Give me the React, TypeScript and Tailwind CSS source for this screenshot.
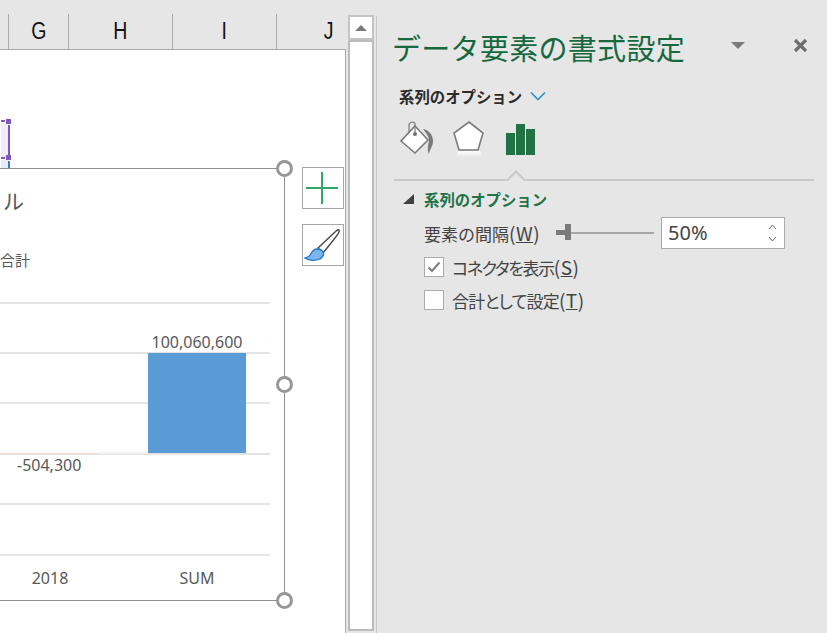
const jp = "font-['Noto_Sans_CJK_JP','Noto_Sans',sans-serif]"
const num = "font-['Noto_Sans',sans-serif]"

function ColHead({ label, width }: { label?: string; width: string }) {
  return (
    <div className={`${width} h-[35px] shrink-0 border-r border-[#ababab] flex items-center justify-center text-[23px] text-[#111] font-['Liberation_Sans',sans-serif]`}>
      {label && <span className="inline-block scale-x-[0.85]">{label}</span>}
    </div>
  )
}

function Handle({ top }: { top: string }) {
  return <div className={`absolute left-[276px] ${top} w-[17px] h-[17px] rounded-full border-[3px] border-[#979797] bg-white`} />
}

function Chart() {
  const grid = ['top-[302px]', 'top-[352px]', 'top-[402px]', 'top-[453px]', 'top-[503px]', 'top-[554px]']
  return (
    <>
      {/* selected cell range */}
      <div className="absolute left-px top-[123px] w-[7px] h-[34px] bg-[#f0eef8]" />
      <div className="absolute left-px top-[120px] w-[4px] h-[2px] bg-[#7f57bd]" />
      <div className="absolute left-px top-[157px] w-[4px] h-[2px] bg-[#7f57bd]" />
      <div className="absolute left-[8px] top-[125px] w-[2px] h-[30px] bg-[#7f57bd]" />
      <div className="absolute left-[6px] top-[119px] w-[5px] h-[5px] bg-[#7f57bd]" />
      <div className="absolute left-[6px] top-[155px] w-[5px] h-[5px] bg-[#7f57bd]" />
      <div className="absolute left-px top-[160px] w-[7px] h-[8px] bg-[#e6eff9]" />
      <div className="absolute left-[8px] top-[161px] w-[2px] h-[7px] bg-[#3f78c6]" />

      {/* chart frame */}
      <div className="absolute left-0 top-[168px] w-[285px] h-[433px] bg-white border-t border-b border-r border-[#8f8f8f]" />
      {grid.map((top) => (
        <div key={top} className={`absolute left-0 ${top} w-[270px] h-[2px] bg-[#e4e4e4]`} />
      ))}
      <div className="absolute left-0 top-[453px] w-[98px] h-px bg-[#f6d9c8]" />
      <div className="absolute left-[98px] top-[452px] w-[50px] h-[2px] bg-[#f3f3f3]" />
      <div className="absolute left-[148px] top-[353px] w-[98px] h-[100px] bg-[#5b9bd5]" />

      <div className={`absolute left-0 top-[185px] w-[24px] text-right whitespace-nowrap text-[21px] leading-[30px] text-[#595959] ${jp}`}>ル</div>
      <div className={`absolute left-0 top-[250px] w-[29px] text-right whitespace-nowrap text-[15px] leading-[20px] text-[#595959] ${jp}`}>合計</div>
      <div className={`absolute left-[147px] top-[332px] w-[100px] text-center text-[16px] leading-[20px] text-[#595959] ${num}`}>100,060,600</div>
      <div className={`absolute left-[17px] top-[455px] text-[16px] leading-[20px] text-[#595959] ${num}`}>-504,300</div>
      <div className={`absolute left-0 top-[568px] w-[100px] text-center text-[16px] leading-[20px] text-[#595959] ${num}`}>2018</div>
      <div className={`absolute left-[147px] top-[568px] w-[100px] text-center text-[16px] leading-[20px] text-[#595959] ${num}`}>SUM</div>

      <Handle top="top-[160px]" />
      <Handle top="top-[376px]" />
      <Handle top="top-[592px]" />

      {/* chart side buttons */}
      <div className="absolute left-[302px] top-[167px] w-[42px] h-[42px] bg-white border border-[#a6a6a6] flex items-center justify-center pr-[3px] pb-[1px]">
        <svg width="32" height="32" viewBox="0 0 32 32">
          <path d="M16 0V32M0 16H32" stroke="#2fa866" strokeWidth="2" fill="none" />
        </svg>
      </div>
      <div className="absolute left-[302px] top-[224px] w-[42px] h-[42px] bg-white border border-[#a6a6a6]">
        <svg width="40" height="40" viewBox="0 0 40 40">
          <path d="M15 23L32 7C35 4 37 4 36 7C35 10 28 18 20 28Z" fill="#fff" stroke="#4a4a4a" strokeWidth="1.4" />
          <path d="M14 24C10 24 9 27 7.500 29.500C6 32 4 32.500 2 33C6 36 13 36 17 34C20 32 21 29 20 27C19 25 16 24 14 24Z" fill="#7cb6ec" stroke="#1f78c8" strokeWidth="1.3" />
        </svg>
      </div>
    </>
  )
}

function Scrollbar() {
  return (
    <div className="w-[30px] shrink-0 flex flex-col pt-[15px] pl-[2px] pr-[2px] pb-[2px]">
      <div className="w-[26px] h-[25px] shrink-0 bg-white border-2 border-[#c4c4c4] flex items-center justify-center">
        <div className="w-0 h-0 border-x-[6px] border-x-transparent border-b-[6px] border-b-[#7a7a7a]" />
      </div>
      <div className="w-[26px] flex-1 bg-white border-2 border-[#bcbcbc]" />
    </div>
  )
}

function FillIcon() {
  return (
    <svg width="38" height="38" viewBox="0 0 38 38">
      <path d="M16 7L29 21L16 34L2 22Z" fill="#fff" stroke="#7a7a7a" strokeWidth="1.6" />
      <path d="M10 13V6C10 3 16 2 16 5V15" fill="none" stroke="#7a7a7a" strokeWidth="1.2" />
      <circle cx="16" cy="15" r="2" fill="#6e6e6e" />
      <path d="M24 10C30 11 34 16 34 22C34 28 31 29 30 35C28 31 29 26 30 22C30.500 18 27 14 24 10Z" fill="#7a7a7a" />
    </svg>
  )
}

function ShapeIcon() {
  return (
    <svg width="34" height="38" viewBox="0 0 34 38">
      <defs>
        <linearGradient id="shapeShadow" x1="0" y1="0" x2="0" y2="1">
          <stop offset="0" stopColor="#ffffff" />
          <stop offset="1" stopColor="#ffffff" stopOpacity="0" />
        </linearGradient>
      </defs>
      <path d="M17 3L31 14L26 31H7L2 14Z" fill="#fff" stroke="#7a7a7a" strokeWidth="1.6" />
      <path d="M6 32H28L30 38H4Z" fill="url(#shapeShadow)" />
    </svg>
  )
}

function BarsIcon() {
  return (
    <div className="flex items-end gap-px h-[32px]">
      <div className="w-[9px] h-[22px] bg-[#217346]" />
      <div className="w-[9px] h-[31px] bg-[#217346]" />
      <div className="w-[9px] h-[26px] bg-[#217346]" />
    </div>
  )
}

function Shortcut({ hot }: { hot: string }) {
  return (
    <span className="text-[19px] tracking-[0.5px]">
      (<span className="underline">{hot}</span>)
    </span>
  )
}

function Checkbox({ checked, label, hot, tracking }: { checked?: boolean; label: string; hot: string; tracking: string }) {
  return (
    <div className="flex items-center gap-[8px] h-[20px]">
      <div className="w-[20px] h-[20px] bg-white border border-[#ababab] flex items-center justify-center">
        {checked && (
          <svg width="14" height="12" viewBox="0 0 14 12">
            <path d="M1.500 6.500L5 10L12.500 1.500" fill="none" stroke="#808080" strokeWidth="2.200" />
          </svg>
        )}
      </div>
      <span className="text-[17px] leading-[20px] text-[#444] whitespace-nowrap [font-feature-settings:'palt']">
        <span className={tracking}>{label}</span>
        <Shortcut hot={hot} />
      </span>
    </div>
  )
}

function Panel() {
  return (
    <div className={`flex-1 min-w-0 pl-[15px] pr-[12px] ${jp}`}>
      <div className="flex items-center h-[46px] mt-[24px]">
        <h1 className="text-[29px] leading-[46px] font-normal text-[#16693f] whitespace-nowrap tracking-[0.3px]">データ要素の書式設定</h1>
        <div className="ml-[46px] mb-[3px] w-0 h-0 border-x-[7px] border-x-transparent border-t-[7px] border-t-[#7a7a7a]" />
        <svg className="ml-[48px] mb-[4px]" width="15" height="15" viewBox="0 0 15 15">
          <path d="M2 2L13 13M13 2L2 13" stroke="#6e6e6e" strokeWidth="3.200" fill="none" />
        </svg>
      </div>
      <div className="flex items-center gap-[8px] mt-[15px] ml-[7px] h-[22px]">
        <span className="text-[15.400px] leading-[22px] font-bold text-[#2b2b2b] whitespace-nowrap">系列のオプション</span>
        <svg width="16" height="10" viewBox="0 0 16 10">
          <path d="M1 1.500L8 8.500L15 1.500" fill="none" stroke="#2f8fd0" strokeWidth="1.600" />
        </svg>
      </div>
      <div className="flex items-end mt-[12px] ml-[7px] h-[38px]">
        <FillIcon />
        <div className="ml-[15px]"><ShapeIcon /></div>
        <div className="ml-[20px] mb-[2px]"><BarsIcon /></div>
      </div>
      <div className="relative mt-[22px] h-[2px] w-[420px] ml-[2px] bg-[#c8c8c8]">
        <div className="absolute left-[115px] -top-[6px] w-[14px] h-[14px] rotate-45 border-l-2 border-t-2 border-[#c8c8c8] bg-[#e6e6e6]" />
      </div>
      <div className="relative flex items-center gap-[10px] mt-[7px] ml-[11px] h-[22px]">
        <div className="w-0 h-0 border-l-[11px] border-l-transparent border-b-[10px] border-b-[#404040]" />
        <span className="text-[15.400px] leading-[22px] font-bold text-[#217346] whitespace-nowrap">系列のオプション</span>
      </div>
      <div className="flex items-center mt-[7px] ml-[32px] h-[32px]">
        <span className="w-[120px] text-[17px] leading-[20px] text-[#444] whitespace-nowrap">要素の間隔<Shortcut hot="W" /></span>
        <div className="relative ml-[12px] w-[98px] h-[2px] bg-[#a6a6a6]">
          <div className="absolute left-0 -top-[2px] w-[10px] h-[5px] bg-[#7a7a7a]" />
          <div className="absolute left-[9px] -top-[8px] w-[6px] h-[16px] bg-[#7a7a7a]" />
        </div>
        <div className="ml-[7px] w-[124px] h-[32px] bg-white border border-[#ababab] flex items-center justify-between pl-[6px] pr-[7px]">
          <span className={`text-[20px] text-[#444] ${num}`}>50%</span>
          <div className="flex flex-col gap-[6px]">
            <svg width="9" height="6" viewBox="0 0 9 6"><path d="M1 5L4.500 1L8 5" fill="none" stroke="#666" strokeWidth="1" /></svg>
            <svg width="9" height="6" viewBox="0 0 9 6"><path d="M1 1L4.500 5L8 1" fill="none" stroke="#666" strokeWidth="1" /></svg>
          </div>
        </div>
      </div>
      <div className="flex flex-col gap-[13px] mt-[8px] ml-[32px]">
        <Checkbox checked label="コネクタを表示" hot="S" tracking="tracking-[-1.4px]" />
        <Checkbox label="合計として設定" hot="T" tracking="tracking-[-0.8px]" />
      </div>
    </div>
  )
}

export default function App() {
  return (
    <div className="w-[827px] h-[633px] overflow-hidden flex bg-[#e6e6e6]">
      <div className="w-[346px] shrink-0 flex flex-col">
        <div className="h-[50px] shrink-0 pt-[14px] border-b border-[#ababab] flex overflow-hidden">
          <ColHead width="w-[9px]" />
          <ColHead label="G" width="w-[60px]" />
          <ColHead label="H" width="w-[104px]" />
          <ColHead label="I" width="w-[104px]" />
          <ColHead label="J" width="w-[104px]" />
        </div>
        <div className="relative flex-1 bg-white border-r border-[#ababab]">
          <div className="absolute left-0 -top-[50px] w-[344px] h-[633px]">
            <Chart />
          </div>
        </div>
      </div>
      <Scrollbar />
      <div className="w-px shrink-0 mt-[16px] bg-[#c6c6c6]" />
      <Panel />
    </div>
  )
}
